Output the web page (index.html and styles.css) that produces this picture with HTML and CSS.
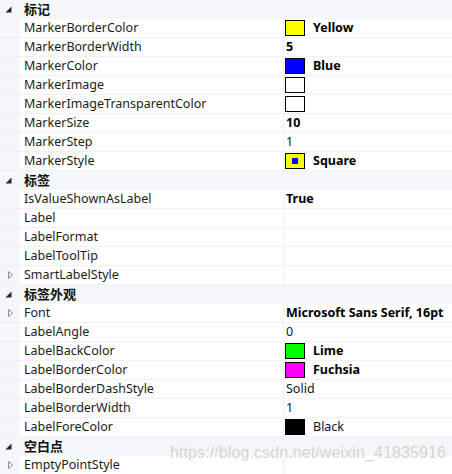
FILE: index.html
```html
<!DOCTYPE html>
<html>
<head>
<meta charset="utf-8">
<link rel="stylesheet" href="styles.css">
</head>
<body>
<div class="grid">
  <div class="row cat"><span class="gut"><svg class="exp" width="20" height="18" viewBox="0 0 20 18"><path d="M11.5 6.5 L11.5 12.5 L5.5 12.5 Z" fill="#262626"/></svg></span><span class="cname">标记</span></div>
  <div class="row"><span class="gut"></span><span class="name">MarkerBorderColor</span><span class="val bold"><i class="sw" style="background:#ffff00"></i>Yellow</span></div>
  <div class="row"><span class="gut"></span><span class="name">MarkerBorderWidth</span><span class="val bold">5</span></div>
  <div class="row"><span class="gut"></span><span class="name">MarkerColor</span><span class="val bold"><i class="sw" style="background:#0000ff"></i>Blue</span></div>
  <div class="row"><span class="gut"></span><span class="name">MarkerImage</span><span class="val"><i class="sw" style="background:#ffffff"></i></span></div>
  <div class="row"><span class="gut"></span><span class="name">MarkerImageTransparentColor</span><span class="val"><i class="sw" style="background:#ffffff"></i></span></div>
  <div class="row"><span class="gut"></span><span class="name">MarkerSize</span><span class="val bold">10</span></div>
  <div class="row"><span class="gut"></span><span class="name">MarkerStep</span><span class="val">1</span></div>
  <div class="row"><span class="gut"></span><span class="name">MarkerStyle</span><span class="val bold"><i class="sw sq"><b></b></i>Square</span></div>
  <div class="row cat"><span class="gut"><svg class="exp" width="20" height="18" viewBox="0 0 20 18"><path d="M11.5 6.5 L11.5 12.5 L5.5 12.5 Z" fill="#262626"/></svg></span><span class="cname">标签</span></div>
  <div class="row"><span class="gut"></span><span class="name">IsValueShownAsLabel</span><span class="val bold">True</span></div>
  <div class="row"><span class="gut"></span><span class="name">Label</span><span class="val"></span></div>
  <div class="row"><span class="gut"></span><span class="name">LabelFormat</span><span class="val"></span></div>
  <div class="row"><span class="gut"></span><span class="name">LabelToolTip</span><span class="val"></span></div>
  <div class="row"><span class="gut"><svg width="20" height="18" viewBox="0 0 20 18"><path d="M8.5 5.5 L12.5 9 L8.5 12.5 Z" fill="none" stroke="#8c8c8c"/></svg></span><span class="name">SmartLabelStyle</span><span class="val"></span></div>
  <div class="row cat"><span class="gut"><svg class="exp" width="20" height="18" viewBox="0 0 20 18"><path d="M11.5 6.5 L11.5 12.5 L5.5 12.5 Z" fill="#262626"/></svg></span><span class="cname">标签外观</span></div>
  <div class="row"><span class="gut"><svg width="20" height="18" viewBox="0 0 20 18"><path d="M8.5 5.5 L12.5 9 L8.5 12.5 Z" fill="none" stroke="#8c8c8c"/></svg></span><span class="name">Font</span><span class="val bold">Microsoft Sans Serif, 16pt</span></div>
  <div class="row"><span class="gut"></span><span class="name">LabelAngle</span><span class="val">0</span></div>
  <div class="row"><span class="gut"></span><span class="name">LabelBackColor</span><span class="val bold"><i class="sw" style="background:#00ff00"></i>Lime</span></div>
  <div class="row"><span class="gut"></span><span class="name">LabelBorderColor</span><span class="val bold"><i class="sw" style="background:#ff00ff"></i>Fuchsia</span></div>
  <div class="row"><span class="gut"></span><span class="name">LabelBorderDashStyle</span><span class="val">Solid</span></div>
  <div class="row"><span class="gut"></span><span class="name">LabelBorderWidth</span><span class="val">1</span></div>
  <div class="row"><span class="gut"></span><span class="name">LabelForeColor</span><span class="val"><i class="sw" style="background:#000000"></i>Black</span></div>
  <div class="row cat"><span class="gut"><svg class="exp" width="20" height="18" viewBox="0 0 20 18"><path d="M11.5 6.5 L11.5 12.5 L5.5 12.5 Z" fill="#262626"/></svg></span><span class="cname">空白点</span></div>
  <div class="row"><span class="gut"><svg width="20" height="18" viewBox="0 0 20 18"><path d="M8.5 5.5 L12.5 9 L8.5 12.5 Z" fill="none" stroke="#8c8c8c"/></svg></span><span class="name">EmptyPointStyle</span><span class="val"></span></div>
  <div class="wm">https://blog.csdn.net/weixin_41835916</div>
</div>
</body>
</html>
```
FILE: styles.css
```css
html, body {
  margin: 0;
  padding: 0;
  background: #ffffff;
}
.grid {
  position: relative;
  width: 452px;
  height: 474px;
  overflow: hidden;
  font-family: "Noto Sans", "Noto Sans CJK SC", sans-serif;
  font-size: 12.5px;
  color: #1b1b1b;
}
.row {
  display: grid;
  grid-template-columns: 20px 263px 169px;
  height: 19px;
  box-sizing: border-box;
  border-bottom: 1px solid #eff1f5;
  background: linear-gradient(to right, #f4f6fa 20px, transparent 20px);
}
.row.cat {
  background: #f4f6fa;
  border-bottom-color: #f4f6fa;
  grid-template-columns: 20px 1fr;
}
.gut {
  display: block;
  height: 18px;
  background: #f4f6fa;
}
.gut svg {
  display: block;
}
.name, .cname {
  padding-left: 4px;
  line-height: 18px;
  white-space: nowrap;
  overflow: hidden;
}
.cname {
  font-family: "Noto Sans CJK SC", sans-serif;
  font-weight: bold;
  font-size: 13px;
  color: #111;
}
.val {
  display: flex;
  align-items: center;
  gap: 8px;
  padding-left: 2px;
  border-left: 1px solid #eff1f5;
  line-height: 18px;
  white-space: nowrap;
  color: #10102a;
}
.val.bold {
  font-weight: bold;
  color: #000;
}
.sw {
  display: block;
  width: 18px;
  height: 14px;
  border: 1px solid #000;
  margin-left: -1px;
  flex: none;
}
.sq {
  background: #ffff00;
  display: flex;
  align-items: center;
  justify-content: center;
}
.sq b {
  display: block;
  width: 6px;
  height: 6px;
  background: #0000ff;
}
.wm {
  position: absolute;
  left: 170px;
  top: 444px;
  font-family: "Liberation Sans", sans-serif;
  font-size: 16px;
  letter-spacing: 0.1px;
  color: rgba(200, 200, 200, 0.75);
  white-space: nowrap;
}
```
